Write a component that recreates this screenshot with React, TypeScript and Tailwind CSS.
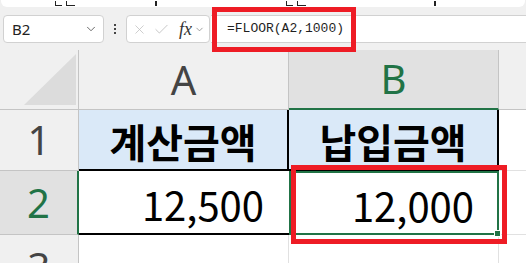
import { X, Check, ChevronDown } from 'lucide-react';

function RibbonEdge() {
  return (
    <div className="relative mx-[1px] h-[7px] overflow-hidden rounded-b-[6px] bg-white">
      <div className="absolute bottom-[1px] left-[54px] flex gap-[4px] leading-none">
        <span className="h-[5px] w-[7px] border-b-[1.5px] border-l-[1.5px] border-[#222]" />
        <span className="h-[5px] w-[9px] border-b-[1.5px] border-l-[1.5px] border-[#222]" />
      </div>
      <span className="absolute bottom-[1px] left-[154px] h-[5px] w-[2px] bg-[#222]" />
      <div className="absolute bottom-[1px] left-[285px] flex gap-[4px]">
        <span className="h-[5px] w-[7px] border-b-[1.5px] border-l-[1.5px] border-[#222]" />
        <span className="h-[5px] w-[9px] border-b-[1.5px] border-l-[1.5px] border-[#222]" />
      </div>
      <span className="absolute bottom-[1px] left-[433px] h-[5px] w-[2px] bg-[#222]" />
    </div>
  );
}

function FormulaBar() {
  return (
    <div className="mt-[8px] flex h-[28px] items-stretch">
      <div className="ml-[3px] flex w-[101px] items-center justify-between rounded-[4px] border border-[#d1d1d1] bg-white pl-[8px] pr-[5px]">
        <span className="font-['Noto_Sans',sans-serif] text-[15px] text-[#222]">B2</span>
        <ChevronDown className="h-[14px] w-[14px] text-[#555]" strokeWidth={1.5} />
      </div>
      <div className="flex w-[22px] flex-col items-center justify-center gap-[2px]">
        <span className="h-[2px] w-[2px] bg-[#444]" />
        <span className="h-[2px] w-[2px] bg-[#444]" />
        <span className="h-[2px] w-[2px] bg-[#444]" />
      </div>
      <div className="flex w-[84px] items-center rounded-[4px] border border-[#d1d1d1] bg-white pl-[5px]">
        <X className="h-[15px] w-[15px] text-[#bdbdbd]" strokeWidth={1.2} />
        <Check className="ml-[6px] h-[17px] w-[17px] text-[#bdbdbd]" strokeWidth={1.2} />
        <span className="ml-[9px] font-['Liberation_Serif',serif] text-[18px] italic leading-none text-[#333]">fx</span>
        <ChevronDown className="ml-[2px] h-[11px] w-[11px] text-[#777]" strokeWidth={1.5} />
      </div>
      <div className="ml-[1px] flex flex-1 items-center border-y border-[#d1d1d1] bg-white pl-[16px]">
        <span className="font-['Liberation_Mono',monospace] text-[13px] text-[#1f1f1f]">=FLOOR(A2,1000)</span>
      </div>
    </div>
  );
}

function Sheet() {
  const head = "flex items-center justify-center font-['Noto_Sans',sans-serif] text-[40px] leading-none";
  return (
    <div className="mt-[7px] grid h-[213px] grid-cols-[79px_210px_210px_1fr] grid-rows-[60px_61px_64px_1fr]">
      {/* header row */}
      <div className="flex items-end justify-end border-b border-r border-[#c4c4c4] bg-[#f0f0f0] pb-[4px] pr-[2px]">
        <div className="h-[51px] w-[52px] bg-[#dcdcdc] [clip-path:polygon(100%_0,100%_100%,0_100%)]" />
      </div>
      <div className={`${head} border-b border-r border-[#c4c4c4] bg-[#f0f0f0] text-[#444]`}>A</div>
      <div className={`${head} border-b-2 border-r border-b-[#217346] border-r-[#c4c4c4] bg-[#e1e1e1] text-[#217346]`}>B</div>
      <div className="border-b border-[#c4c4c4] bg-[#f0f0f0]" />

      {/* row 1 */}
      <div className={`${head} border-b border-r border-[#c4c4c4] bg-[#f0f0f0] text-[#444]`}>1</div>
      <div className="flex items-center justify-center border-b-2 border-r-2 border-black bg-[#dae9f8] pt-[2px] font-['Noto_Sans_CJK_KR',sans-serif] text-[40px] font-bold leading-none text-black">
        계산금액
      </div>
      <div className="flex items-center justify-center border-b-2 border-r-2 border-black bg-[#dae9f8] pt-[2px] font-['Noto_Sans_CJK_KR',sans-serif] text-[40px] font-bold leading-none text-black">
        납입금액
      </div>
      <div className="border-b border-[#e1e1e1] bg-white" />

      {/* row 2 */}
      <div className={`${head} border-b border-r-2 border-b-[#c4c4c4] border-r-[#217346] bg-[#e1e1e1] text-[#217346]`}>2</div>
      <div className="flex items-center justify-end border-b-2 border-black bg-white pr-[25px] pt-[4px] font-['Noto_Sans_CJK_KR',sans-serif] text-[40px] leading-none text-black">
        12,500
      </div>
      <div className="relative flex items-center justify-end border-2 border-[#217346] bg-white pr-[23px] pt-[4px] font-['Noto_Sans_CJK_KR',sans-serif] text-[40px] leading-none text-black">
        12,000
        <span className="absolute bottom-[-4px] right-[-4px] h-[7px] w-[7px] border border-white bg-[#217346]" />
      </div>
      <div className="border-b border-[#e1e1e1] bg-white" />

      {/* row 3 */}
      <div className="flex justify-center border-r border-[#c4c4c4] bg-[#f0f0f0] pt-[12px] font-['Noto_Sans',sans-serif] text-[40px] leading-none text-[#444]">3</div>
      <div className="border-r border-[#e1e1e1] bg-white" />
      <div className="border-r border-[#e1e1e1] bg-white" />
      <div className="bg-white" />
    </div>
  );
}

export default function App() {
  return (
    <div className="relative h-[263px] w-[526px] overflow-hidden bg-[#f0f0f0] font-['Noto_Sans',sans-serif]">
      <RibbonEdge />
      <FormulaBar />
      <Sheet />
      <div className="absolute left-[212px] top-[7px] h-[45px] w-[144px] border-[5px] border-[#ee1c25]" />
      <div className="absolute left-[291px] top-[165px] h-[79px] w-[216px] border-[5px] border-[#ee1c25]" />
    </div>
  );
}
